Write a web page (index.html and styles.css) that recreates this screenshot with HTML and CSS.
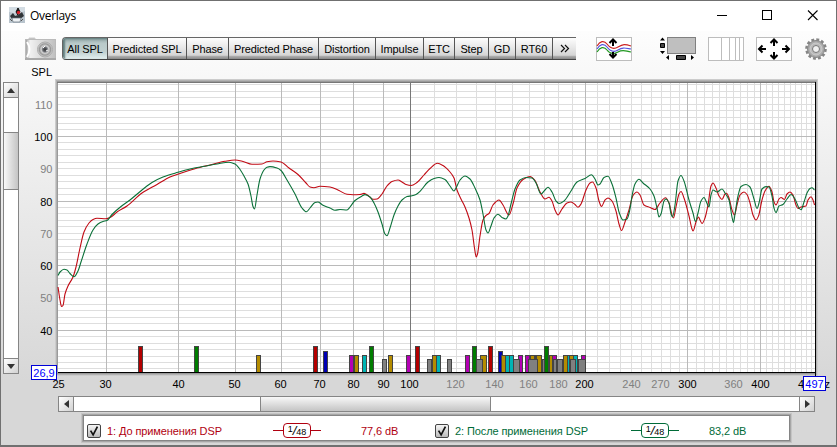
FILE: index.html
```html
<!DOCTYPE html>
<html lang="ru">
<head>
<meta charset="utf-8">
<title>Overlays</title>
<link rel="stylesheet" href="styles.css">
</head>
<body>
<div class="window">
  <header class="titlebar">
    <svg class="app-icon" width="16" height="16" viewBox="0 0 16 16">
      <rect width="16" height="16" fill="#b9c4cd"/>
      <path d="M0 0h16v4L9 7 0 5z" fill="#d3dce3"/>
      <path d="M1 9l3-3 2 3 3-1 4-3 2 4-4 3H3z" fill="#303438"/>
      <path d="M9 1L7 5l2 3-1-3 3 0z" fill="#111" stroke="#111"/>
      <circle cx="9.5" cy="5.5" r="1.7" fill="#d4202a"/>
      <path d="M3 11h9l-1 4H4z" fill="#eef2f5" stroke="#68747e" stroke-width=".7"/>
      <path d="M1 12l2 2M14 12l-2 2" stroke="#555"/>
    </svg>
    <span class="title">Overlays</span>
    <svg class="winctl" width="120" height="20" viewBox="0 0 120 20" fill="none" stroke="#000">
      <path d="M8 10.5h10M53.500 5.500h9v9h-9z" shape-rendering="crispEdges"/>
      <path d="M99 5.500l9.500 9.500M108.500 5.500l-9.500 9.500" stroke-width="1.100"/>
    </svg>
  </header>

  <div class="toolbar">
    <svg class="camera" width="31" height="23" viewBox="0 0 31 23">
      <defs>
        <linearGradient id="cam" x2="1"><stop offset="0" stop-color="#999"/><stop offset=".15" stop-color="#f1f1f1"/><stop offset=".4" stop-color="#e2e2e2"/><stop offset="1" stop-color="#c0c0c0"/></linearGradient>
        <radialGradient id="lens"><stop offset="0" stop-color="#333"/><stop offset=".3" stop-color="#676a70"/><stop offset=".5" stop-color="#d4d4d4"/><stop offset=".75" stop-color="#999"/><stop offset="1" stop-color="#ddd"/></radialGradient>
      </defs>
      <path d="M4 3V1h6v2" fill="#bbb" stroke="#ccc"/>
      <rect x=".5" y="2.500" width="30" height="19" fill="url(#cam)" stroke="#bbb"/>
      <path d="M2 5q5 7 0 15" fill="none" stroke="#fff" stroke-width="2"/>
      <circle cx="20" cy="12.500" r="7.500" fill="url(#lens)" stroke="#aaa"/>
      <path d="M18 11l2-2M21 14l2-1" stroke="#fff"/>
      <path d="M0 22.200h31" stroke="#858585"/>
    </svg>
    <nav class="tabs">
      <button class="tab w-all active">All SPL</button><button class="tab w-pspl">Predicted SPL</button><button class="tab w-phase">Phase</button><button class="tab w-pphase">Predicted Phase</button><button class="tab w-dist">Distortion</button><button class="tab w-imp">Impulse</button><button class="tab w-etc">ETC</button><button class="tab w-step">Step</button><button class="tab w-gd">GD</button><button class="tab w-rt">RT60</button><button class="tab w-more"><svg width="10" height="9" viewBox="0 0 10 9" fill="none" stroke="#111" stroke-width="1.200"><path d="M1 1l3.500 3.500L1 8M5 1l3.500 3.500L5 8"/></svg></button>
    </nav>
    <svg class="icon traces" width="36" height="24" viewBox="0 0 36 24" fill="none">
      <rect x=".5" y=".5" width="35" height="23" fill="#fff" stroke="#bdbdbd"/>
      <g stroke-width="1.200">
        <path stroke="#c22" d="M1 9C4 4 8 3 11 7S17 13 22 10 29 7 35 9"/>
        <path stroke="#55d" d="M1 12C4 7 8 6 11 10S17 16 22 13 29 11 35 12"/>
        <path stroke="#292" d="M1 15C4 10 8 9 11 13S17 18 22 15 29 14 35 15"/>
      </g>
      <g stroke="#000" stroke-width="2"><path d="M17 9V2.500M13.500 6L17 2.500 20.500 6M17 15v5.500M13.500 17L17 20.500 20.500 17"/></g>
    </svg>
    <svg class="icon bars" width="37" height="24" viewBox="0 0 37 24">
      <rect x="8.500" y=".5" width="28" height="16" fill="#bfbfbf" stroke="#808080"/>
      <path d="M1 3.500l2.500-3 2.500 3zM1 14l2.500 3L6 14zM10 18v5l-3-2.500zM32 18v5l3-2.500z"/>
      <path d="M1.500 6.500h4v4h-4zM17.500 18.500h9v4h-9z" fill="#444" stroke="#000"/>
    </svg>
    <svg class="icon grid-icon" width="36" height="24" viewBox="0 0 36 24" shape-rendering="crispEdges">
      <path d="M.5.5h35v23H.5zM13.500 0v24M21.500 0v24M27.500 0v24M31.500 0v24" fill="#fff" stroke="#bdbdbd"/>
    </svg>
    <svg class="icon arrows" width="36" height="24" viewBox="0 0 36 24" fill="none">
      <rect x=".5" y=".5" width="35" height="23" fill="#fff" stroke="#bdbdbd"/>
      <g stroke="#000" stroke-width="2"><path d="M18 9V3M14.500 6L18 2.500 21.500 6M18 15v6M14.500 18l3.500 3.500 3.500-3.500M10 12H3M6.500 8.500L3 12l3.500 3.500M26 12h7M29.500 8.500L33 12l-3.500 3.500"/></g>
    </svg>
    <svg class="icon gear" width="22" height="22" viewBox="0 0 22 22">
      <circle cx="11" cy="11" r="9.300" fill="none" stroke="#858585" stroke-width="3" stroke-dasharray="2.800 2.070"/>
      <circle cx="11" cy="11" r="8.500" fill="#aaa" stroke="#888"/>
      <circle cx="11" cy="11" r="6" fill="#bcbcbc" stroke="#ccc"/>
      <circle cx="11" cy="11" r="3.500" fill="#f1f1f1" stroke="#777"/>
    </svg>
  </div>

  <main class="main">
    <div class="vscroll">
      <i class="sbtn up"></i><i class="vthumb"></i><i class="sbtn down"></i>
    </div>
    <svg id="chart" class="chart" width="816" height="330" viewBox="20 63 816 330">
      <text class="label end" x="52" y="76">SPL</text>
      <g class="frame">
        <rect x="55" y="79" width="763" height="297" fill="#ccc"/>
        <rect x="56" y="80" width="761" height="295" fill="#b2b2b2"/>
        <rect x="57" y="81" width="759" height="293" fill="#9a9a9a"/>
        <rect x="58" y="82" width="757" height="290" fill="#fff"/>
      </g>
      <g id="grid" shape-rendering="crispEdges"></g>
      <g id="modes" shape-rendering="crispEdges"></g>
      <path id="red" class="trace red-trace"/>
      <path id="green" class="trace green-trace"/>
      <path d="M57 82.500h759" stroke="#777" shape-rendering="crispEdges"/>
      <path d="M58 372.500h758M815.500 82v294" stroke="#000" shape-rendering="crispEdges"/>
      <g id="labels"></g>
      <text class="label" x="798" y="388">4</text>
      <text class="label" x="824.500" y="388">z</text>
      <g class="tag">
        <rect x="31.500" y="365.500" width="25" height="14"/><text x="44" y="377">26,9</text>
        <rect x="803.500" y="376.500" width="22" height="14"/><text x="814.500" y="388">497</text>
      </g>
    </svg>
  </main>

  <div class="hscroll">
    <i class="sbtn left"></i><i class="hthumb"></i><i class="sbtn right"></i>
  </div>

  <footer class="legend">
    <div class="entry red">
      <span class="check"><svg width="14" height="14" viewBox="0 0 14 14"><path d="M3 6.500l3 5L11 2" fill="none" stroke="#111" stroke-width="2"/></svg></span>
      <span class="name">1: До применения DSP</span>
      <span class="smooth"><b><sup>1</sup><em>/</em><sub>48</sub></b></span>
      <span class="value">77,6 dB</span>
    </div>
    <div class="entry green">
      <span class="check"><svg width="14" height="14" viewBox="0 0 14 14"><path d="M3 6.500l3 5L11 2" fill="none" stroke="#111" stroke-width="2"/></svg></span>
      <span class="name">2: После применения DSP</span>
      <span class="smooth"><b><sup>1</sup><em>/</em><sub>48</sub></b></span>
      <span class="value">83,2 dB</span>
    </div>
  </footer>
</div>
<script src="chart.js"></script>
</body>
</html>
```
FILE: styles.css
```css
* { box-sizing: border-box; }
body { margin: 0; font: 11px "Liberation Sans", sans-serif; color: #000; }
.window {
  width: 837px; height: 447px; overflow: hidden;
  display: flex; flex-direction: column;
  border: 1px solid #707070; border-bottom-width: 2px;
  background: linear-gradient(#fff 0, #fdfdfd 31px, #d7d7d7 380px, #d7d7d7);
}
.titlebar { height: 30px; flex: none; background: #fff; display: flex; align-items: center; padding-left: 8px; }
.app-icon { margin-bottom: 2px; }
.title { font: 12px "Open Sans", sans-serif; margin: 0 0 2px 5px; flex: 1; letter-spacing: -.3px; }
.winctl { margin: 0 7px 2px 0; }

.toolbar { height: 31px; flex: none; display: flex; align-items: flex-start; padding: 6px 0 0 24px; }
.tabs {
  display: flex; height: 23px; margin-left: 6px; width: 514px;
  border: 1px solid #666; border-right: 0; border-bottom-color: #444; border-radius: 4px 0 0 4px; overflow: hidden;
}
.tab {
  border: 0; border-right: 1px solid #555; padding: 0; margin: 0; flex: none;
  font: 11px "Liberation Sans", sans-serif; letter-spacing: -.1px; white-space: nowrap; color: #000;
  background: linear-gradient(#fdfdfd, #e8e8e8 45%, #d5d5d5 82%, #aaa 88%, #888);
}
.tab.active { background: linear-gradient(#8ca2a2, #b9c9c9 25%, #c0d0d0 65%, #e3f0f0); box-shadow: inset 2px 1px 2px #607c7c; }
.w-all { width: 45px; } .w-pspl { width: 79px; } .w-phase { width: 42px; } .w-pphase { width: 90px; }
.w-dist { width: 57px; } .w-imp { width: 48px; } .w-etc { width: 31px; } .w-step { width: 34px; }
.w-gd { width: 27px; } .w-rt { width: 37px; } .w-more { width: 24px; border-right: 0; }
.icon { flex: none; }
.traces { margin-left: 20px; }
.bars { margin-left: 27px; }
.grid-icon { margin-left: 12px; }
.arrows { margin-left: 12px; }
.gear { margin: 1px 0 0 13px; }

.main { height: 330px; flex: none; display: flex; margin-top: 1px; }
.vscroll {
  width: 16px; height: 292px; margin: 19px 0 0 2px; flex: none;
  border: 1px solid #858585; background: #fff; display: flex; flex-direction: column;
}
.chart { flex: none; margin-left: 1px; display: block; }
.sbtn { display: flex; align-items: center; justify-content: center; flex: none; width: 14px; height: 15px; background: linear-gradient(135deg, #fff, #d2d2d2); }
.sbtn::before { content: ""; border: 4px solid transparent; }
.up { border-bottom: 1px solid #858585; }
.up::before { border-top: 0; border-bottom: 5px solid #333; }
.down { border-top: 1px solid #858585; margin-top: auto; }
.down::before { border-bottom: 0; border-top: 5px solid #333; }
.vthumb { height: 58px; margin-top: 34px; border: solid #858585; border-width: 1px 0; background: linear-gradient(90deg, #f8f8f8, #c4c4c4); }
.hscroll {
  display: flex; flex: none; width: 757px; height: 16px; margin: 3px 0 0 57px;
  border: 1px solid #858585; background: #fff;
}
.hthumb { width: 231px; margin-left: 186px; border: solid #858585; border-width: 0 1px; background: linear-gradient(#f8f8f8, #c4c4c4); }
.left { width: 15px; height: 14px; border-right: 1px solid #858585; }
.left::before { border-left: 0; border-right: 5px solid #333; }
.right { width: 15px; height: 14px; border-left: 1px solid #858585; margin-left: auto; }
.right::before { border-right: 0; border-left: 5px solid #333; }

.label { font-size: 11px; fill: #000; }
.label.minor { fill: #808080; }
.mid { text-anchor: middle; }
.end { text-anchor: end; }
.trace { fill: none; stroke-width: 1.1; }
.red-trace { stroke: #c00a14; }
.green-trace { stroke: #0a7038; }
.tag rect { fill: #fff; stroke: #0000d8; }
.tag text { fill: #0000ff; font-size: 11px; text-anchor: middle; }

.legend {
  display: flex; flex: none; width: 705px; height: 24px; margin: 4px 0 0 83px;
  background: #fff; box-shadow: 0 0 0 1px #858585, 0 0 0 2px #a6a6a6, 0 0 0 3px #c4c4c4;
}
.entry { display: flex; align-items: center; height: 29px; width: 348px; padding-left: 3px; flex: none; }
.red { color: #b00010; }
.green { color: #006b38; }
.check { width: 14px; height: 14px; border: 1px solid #444; border-radius: 2px; background: linear-gradient(#f5f5f5, #bbb); display: flex; align-items: center; justify-content: center; }
.name { margin-left: 6px; width: 166px; white-space: nowrap; letter-spacing: -.1px; }
.green .name { width: 176px; }
.smooth { width: 48px; display: flex; align-items: center; }
.smooth::before, .smooth::after { content: ""; height: 1px; flex: 1; background: currentColor; }
.smooth b { width: 28px; height: 15px; border: 1px solid; border-radius: 4px; font-weight: normal; display: flex; justify-content: center; line-height: 13px; }
.smooth sup, .smooth sub, .smooth em { color: #000; font-size: 9px; vertical-align: baseline; }
.smooth sup { line-height: 10px; }
.smooth em { font-size: 13px; font-style: italic; }
.smooth sub { line-height: 16px; }
.value { margin-left: 40px; white-space: nowrap; letter-spacing: -.1px; }
.green .value { margin-left: 30px; }
```
FILE: chart.js
```js
const NS = "http://www.w3.org/2000/svg";
const xOf = f => 410.3 + 252.7 * Math.log(f / 100);
const yOf = db => 136.4 + (100 - db) * 3.23;

function add(parent, tag, attrs, text) {
  const el = document.createElementNS(NS, tag);
  for (const k in attrs) el.setAttribute(k, attrs[k]);
  if (text !== undefined) el.textContent = text;
  document.getElementById(parent).appendChild(el);
}

// Grid: minor lines first, then major ones over them
const lines = [];
for (let db = 116; db > 27; db -= 2) lines.push([db % 20 === 0 ? 1 : 0, `M58 ${Math.floor(yOf(db)) + .5}H815`]);
for (let f = 30; f < 497; f += 10) {
  const rank = f === 100 ? 2 : f < 100 || f % 100 === 0 ? 1 : 0;
  lines.push([rank, `M${Math.floor(xOf(f)) + .5} 83V372`]);
}
lines.sort((a, b) => a[0] - b[0]);
for (const [rank, d] of lines) add("grid", "path", { d, stroke: ["#dedede", "#bababa", "#777"][rank] });

// Axis labels
for (let db = 110; db >= 40; db -= 10) {
  const minor = db === 110 || (db < 100 && db % 20 !== 0);
  add("labels", "text", { x: 52.5, y: Math.floor(yOf(db)) + 5, class: "label end" + (minor ? " minor" : "") }, db);
}
for (const f of [25, 30, 40, 50, 60, 70, 80, 90, 100, 120, 140, 160, 180, 200, 240, 270, 300, 360, 400]) {
  const minor = f > 100 && f % 100 !== 0;
  add("labels", "text", { x: Math.round(xOf(f)) - (f === 25 ? 1.5 : .5), y: 388, class: "label mid" + (minor ? " minor" : "") }, f);
}

// Room modes: left edge, colour, optional width
const fill = { r: "#b40000", g: "#007d00", b: "#0000b4", m: "#b400b4", o: "#b48c00", t: "#00b4b4", x: "#808080" };
const top_ = { r: 346, g: 346, b: 351, m: 355, o: 355, t: 355, x: 359 };
const modes = [[138,"r"],[194,"g"],[256,"o"],[313,"r"],[323,"b"],[349,"m"],[354,"o"],[362,"t"],[369,"g"],[382,"x"],[388,"o"],
  [406,"m"],[415,"r"],[427,"x"],[436,"t"],[432,"o"],[447,"x"],[465,"m"],[480,"o",7],[476,"x",7],[472,"g"],[488,"r"],[498,"b"],
  [501,"o"],[505,"t"],[509,"t"],[518,"m"],[513,"x",7],[525,"m"],[530,"o"],[535,"t"],[536,"o",6],[528,"x",10],[542,"x"],[544,"g"],
  [549,"o"],[552,"m"],[553,"x",4],[557,"x",6],[565,"t"],[563,"o"],[569,"o"],[573,"t"],[570,"x",6],[581,"m"],[578,"x",8]];
for (const [x, c, w = 5] of modes)
  add("modes", "rect", { x: x + .5, y: top_[c] + .5, width: w - 1, height: 372 - top_[c], fill: fill[c], stroke: "#444" });

// Monotone cubic through the measured points
function curve(src) {
  const p = src.trim().split(/\s+/).map(s => s.split(",").map(Number));
  const n = p.length, s = [], m = [];
  for (let i = 0; i < n - 1; i++) s.push((p[i + 1][1] - p[i][1]) / (p[i + 1][0] - p[i][0]));
  for (let i = 0; i < n; i++) {
    const a = s[i - 1], b = s[i];
    m.push(a === undefined ? b : b === undefined ? a : a * b <= 0 ? 0 : 2 * a * b / (a + b));
  }
  let d = `M${p[0]}`;
  for (let i = 0; i < n - 1; i++) {
    const h = (p[i + 1][0] - p[i][0]) / 3;
    d += `C${p[i][0] + h} ${p[i][1] + m[i] * h} ${p[i + 1][0] - h} ${p[i + 1][1] - m[i + 1] * h} ${p[i + 1]}`;
  }
  return d;
}

const red = `58,287 60,300 61.5,306.5 63,305.5 65,294 68,286 73,277 76,267 80,248 84,232 89,223 93,219.5 97,218.3 106,218.8 111,217
117,212 127,206 142,193 157,184.5 170,177 178.5,174 195,168.7 211,164.7 225,161.3 235,160 243,161.5 252,164.3 262,164 267,161.8
273,161 281,162 289,168 298,174.5 306,183 310,187 314,187.7 320,186.3 330,187 339,190.5 347,194.3 353,194.7 360,194.5 364,193.4
368,195.5 373,199.3 377,199 382,194 387,186 392,181.5 398,180 402,182 406,184.5 411,185.5 417,182.5 424,175 430,168.5 437.5,163.3
443,165.5 450,172 454,178 457,190 461,199 465,207 469,218 472,230 474.5,248 476.2,257 477.5,254 480,236 483,220 486,215.5 489,213.5
493,205 499,200 503,205 509,215 513,204 517,188 523,179.5 530,176.5 535,180.5 540,192 545,199 549,197.2 552,201 555,210 558,215
562,209 567,203 571,202 575,204.5 578,207.3 581,204 586,190 590,183 592.5,182 596,188 599,201 601.5,206.5 605,200 608,198 612,201
616,211 619,224 621.5,230.5 625,222 629,210 633,195.5 637,192 640,195 644,205 650,207.5 655,209.5 660,203 665.5,197.8 669,203
672,215 673.5,218 676,207 679,194 681,191.5 684,198 689,216 692,229 693,231 696,222 698.5,217 700,220 702,223.5 705,218 708,205
711,186 713,183 716,188 719,196 722,199.5 725,194 726.5,193.3 729,198 732,210 734.5,215 737,205 740,195 744,192 747,194.5 750,203
753,215 756,220 758.5,216 762,200 765,191 769,186.3 772,192 774,202 776,205 779,199 781,197.5 784.5,199.5 787,194 790,192 793,195
796,205 798,208.5 801,207 806,206 808,200 811,196.8 813,200 814.5,205`;
const green = `58,275.5 60,272 64,269.3 67,270 70,273.5 74,276.8 78,271 81,262 87,244 93,230 98,224 103,221.5 107,220.5 112,214.5
121,206.5 130,200 142,190 152,182.5 163,177 178,172.3 190,169 205,166.2 217,164 229,162.2 235,164 239,168 244,176 248,184 251,196
253,206.5 254.5,209 257,195 260,179 264,170 267,167.3 270,166.6 277,168 281,170.5 287,180 295,194 302,208 306.5,211.8 310,208
315,202.5 318,202 323,205.3 330,208 335,210.3 340,209.5 347,210 350,207 355,200.5 362,196 365,194.6 370,197 374,203 378,212
382,224 385,234 387,235.7 390,228 394,215 398,206 402,200 407,196.5 412,195.8 416,194.5 420,191.3 428,182 434,178.5 439,177.5
445,179.5 450,186 454,191 456,188 460,180 465,176 470,179 475,188 480,200 483,214 486,230 488,233 491,226 494,218 498,214.3
502,217.5 506,219 508,216 511,204 515,189 520,180 526,177.5 532,178 536,183 541,194 545,190 548,187.3 552,192 556,201 559,203.5
564,201 571,191 577,182 585,178.5 591.5,174.7 595,179 598,185 600,184 604,177.5 608,176.3 612,184 616,198 619,212 623,220 627,219
630,209 632,196 635,184 639,179.3 643,183 650,189 654,196 657,208 659,217 661,214 664,201 666,199 669,203 671,214 672.5,217
675,205 678,181 681,175.5 684,181 689,200 693,213 695.5,221.5 698,213 701,201 704,197.5 706,201 709,207 711,195 713,190 717,192
722,189 725,193 729,200 732,217 733.5,222.5 735,214 738,196 741,186.5 746,184.5 750,187 754,199 757,208.5 759,203 762,189
766,186.6 769,187 772,196 774,208 776,212.5 779,206 783,204.5 787,199 791,194.5 795,199 799,208 801,209.8 804,202 807,193
810,188.5 812,187.8 814.5,190`;
document.getElementById("red").setAttribute("d", curve(red));
document.getElementById("green").setAttribute("d", curve(green));
```
